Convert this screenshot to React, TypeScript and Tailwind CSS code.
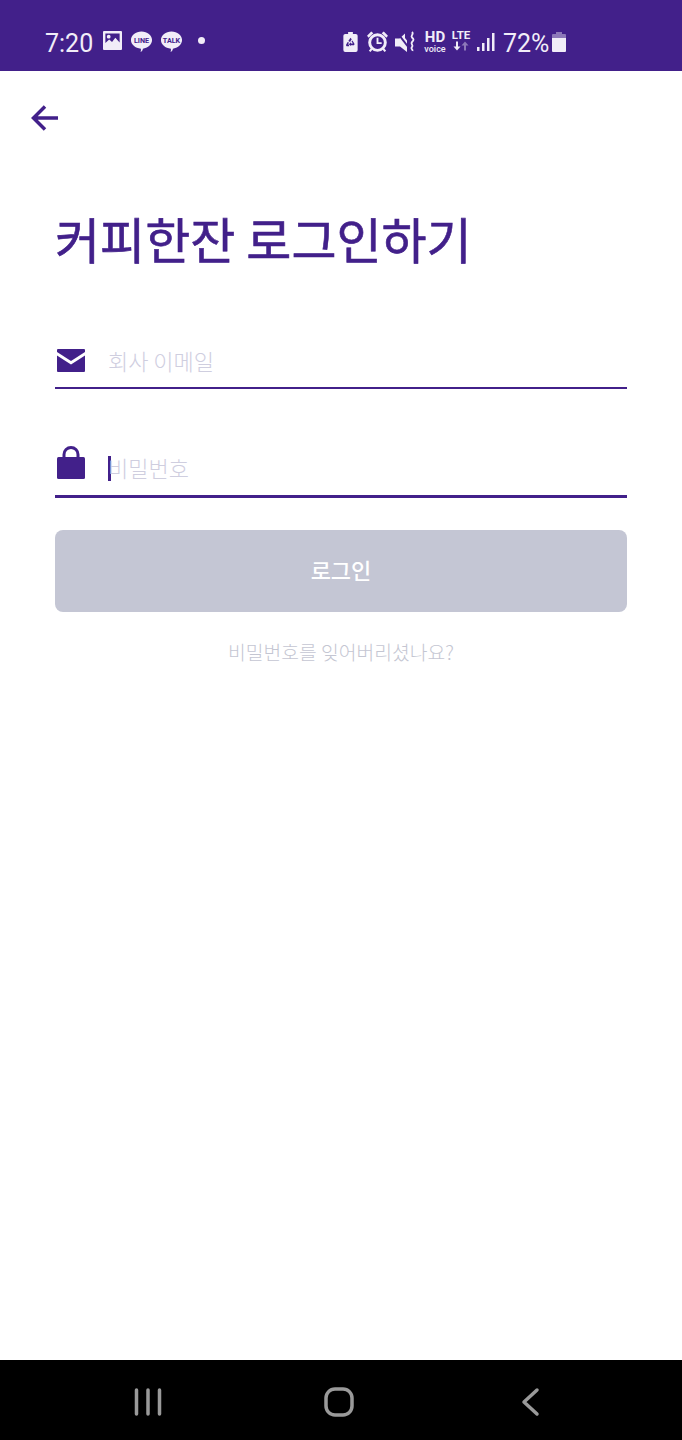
import React from 'react';

const PURPLE = '#42208a';

const StatusBar: React.FC = () => (
  <div className="flex h-[71px] items-center bg-[#42208a] pt-[12px] text-[#f1edf8]">
    <span className="ml-[45px] w-[48px] text-[25px] leading-none font-['Roboto',sans-serif] mt-[3px]">7:20</span>
    <svg className="ml-[10px] mt-[-3px]" width="19" height="19" viewBox="0 0 20 20">
      <path fill="currentColor" fillRule="evenodd" d="M1 0h18a1 1 0 0 1 1 1v18a1 1 0 0 1-1 1H1a1 1 0 0 1-1-1V1a1 1 0 0 1 1-1zm1.500 2.500v10l4-3.500 3 2.500 3.500-4.500 4.500 5V2.500zM6 4a2 2 0 1 1 0 4 2 2 0 0 1 0-4z" />
    </svg>
    <svg className="ml-[8px] mt-[-1px]" width="23" height="23" viewBox="0 0 24 24">
      <path fill="currentColor" d="M12 1.500c6 0 11 3.700 11 9 0 5-5 8.600-9.500 9-.2 1.600-1 2.700-2.500 3.500.4-1.200.5-2.400.4-3.500C5.500 19 1 15.300 1 10.500c0-5.300 5-9 11-9z" />
      <text x="12" y="13.500" textAnchor="middle" fontSize="7.500" fontWeight="700" fill="#42208a" fontFamily="Roboto, sans-serif">LINE</text>
    </svg>
    <svg className="ml-[7px] mt-[-1px]" width="23" height="23" viewBox="0 0 24 24">
      <path fill="currentColor" d="M12 1.500c6 0 11 3.700 11 9 0 5-5 8.600-9.500 9-.2 1.600-1 2.700-2.500 3.500.4-1.200.5-2.400.4-3.500C5.500 19 1 15.300 1 10.500c0-5.300 5-9 11-9z" />
      <text x="12" y="13.500" textAnchor="middle" fontSize="7.500" fontWeight="700" fill="#42208a" fontFamily="Roboto, sans-serif">TALK</text>
    </svg>
    <span className="ml-[15px] mt-[-3px] h-[7px] w-[7px] rounded-full bg-[#f1edf8]" />

    <svg className="ml-[138px]" width="15" height="20" viewBox="0 0 15 21">
      <path fill="currentColor" fillRule="evenodd" d="M5 0h5v2h3a2 2 0 0 1 2 2v15a2 2 0 0 1-2 2H2a2 2 0 0 1-2-2V4a2 2 0 0 1 2-2h3zM7.500 6 5.200 9.500 7 10.500l1.800-2.800zM9.500 9 8.600 9.600 10 12H8v-1.200l-2.300 2 2.300 2V14h2.500a1.200 1.200 0 0 0 1-1.800zM4.500 10.500l-1.500 2.700A1.200 1.200 0 0 0 4 15h2v-1.800H4.700l1.300-2z" />
    </svg>
    <svg className="ml-[8px]" width="23" height="23" viewBox="0 0 22 22">
      <circle cx="11" cy="12" r="7.500" fill="none" stroke="currentColor" strokeWidth="2.800" />
      <path fill="none" stroke="currentColor" strokeWidth="1.800" d="M11 7.500V12.500h4" />
      <path fill="currentColor" d="M1 5.500 5 1.500l2 1.500-4.500 4.500zM21 5.500 17 1.500l-2 1.500 4.500 4.500z" />
      <path stroke="currentColor" strokeWidth="2" d="M5.500 18 3.500 20.500M16.500 18l2 2.500" />
    </svg>
    <svg className="ml-[6px]" width="22" height="22" viewBox="0 0 22 22">
      <path fill="currentColor" d="M0 7.500h4.500L10 2.500V7L12 9.500V21L5 15.500H0z" />
      <path stroke="#42208a" strokeWidth="2" d="M1 0 14 17" />
      <path fill="none" stroke="currentColor" strokeWidth="1.800" d="M17 1c2.500 2.500-2 3.500 0 5.500s2 2.500 0 4.500 2 3 0 5 1 2 .5 4" />
    </svg>
    <div className="ml-[6px] flex w-[24px] flex-col items-center font-['Roboto',sans-serif] font-bold">
      <span className="text-[15px] leading-[14px]">HD</span>
      <span className="mt-[1px] text-[9px] leading-[9px] font-medium">voice</span>
    </div>
    <div className="ml-[2px] flex w-[24px] flex-col items-center mt-[-3px] font-['Roboto',sans-serif]">
      <span className="text-[11.5px] leading-[11px] font-bold">LTE</span>
      <svg width="16" height="10" viewBox="0 0 16 9">
        <path fill="currentColor" d="M3 0h2v5h2.500L4 9 .5 5H3z" />
        <path fill="#8d78b9" d="M11 9h2V4h2.500L12 0 8.500 4H11z" />
      </svg>
    </div>
    <svg className="ml-[3px] mt-[1px]" width="19" height="19" viewBox="0 0 19 19">
      <rect x="1" y="14" width="2.500" height="4" fill="currentColor" />
      <rect x="6" y="10" width="2.500" height="8" fill="currentColor" />
      <rect x="11" y="5" width="2.500" height="13" fill="currentColor" />
      <rect x="16" y="0" width="2.500" height="18" fill="currentColor" />
    </svg>
    <span className="ml-[8px] text-[25px] leading-none font-['Roboto',sans-serif] mt-[3px]">72%</span>
    <svg className="ml-[3px]" width="14" height="20" viewBox="0 0 14 20">
      <path fill="#8d78b9" d="M4 0h6v2h3a1 1 0 0 1 1 1v4H0V3a1 1 0 0 1 1-1h3z" />
      <path fill="currentColor" d="M0 6h14v13a1 1 0 0 1-1 1H1a1 1 0 0 1-1-1z" />
    </svg>
  </div>
);

const MailIcon = () => (
  <svg width="28" height="23" viewBox="0 0 28 23">
    <path fill={PURPLE} d="M1 0h26a1 1 0 0 1 1 1v2L14 12 0 3V1a1 1 0 0 1 1-1z" />
    <path fill={PURPLE} d="M0 6.500 14 15.500l14-9V22a1 1 0 0 1-1 1H1a1 1 0 0 1-1-1z" />
  </svg>
);

const LockIcon = () => (
  <svg width="28" height="33" viewBox="0 0 28 33">
    <path fill="none" stroke={PURPLE} strokeWidth="3" d="M7 12V8.500a7 7 0 0 1 14 0V12" />
    <rect x="0" y="11" width="28" height="22" rx="1.500" fill={PURPLE} />
  </svg>
);

const App: React.FC = () => {
  return (
    <div className="flex h-[1440px] w-[682px] flex-col bg-white font-['Noto_Sans_CJK_KR','Noto_Sans',sans-serif]">
      <StatusBar />

      <main className="flex-1 px-[55px]">
        <svg className="ml-[-25px] mt-[32px] block" width="30" height="30" viewBox="0 0 30 30">
          <path fill="none" stroke={PURPLE} strokeWidth="3.500" d="M28 15H4M15 3.500 3.500 15 15 26.500" />
        </svg>

        <h1 className="mt-[70px] text-[49px] leading-[70px] font-normal text-[#42208a] [-webkit-text-stroke:0.6px_#42208a]">커피한잔 로그인하기</h1>

        <div className="mt-[56px] flex h-[60px] items-center border-b-2 border-[#42208a]">
          <span className="ml-[2px] flex w-[51px] mt-[4px]"><MailIcon /></span>
          <span className="mt-[4px] text-[22px] font-light text-[#cfcedf]">회사 이메일</span>
        </div>

        <div className="mt-[45px] flex h-[64px] items-center border-b-[3px] border-[#42208a]">
          <span className="ml-[2px] flex w-[51px] mt-[-4px]"><LockIcon /></span>
          <span className="h-[25px] w-[3px] bg-[#42208a] mt-[8px]" />
          <span className="ml-[-3px] mt-[6px] text-[22px] font-light text-[#cfcedf]">비밀번호</span>
        </div>

        <button className="mt-[32px] flex h-[82px] w-full items-center justify-center rounded-[8px] bg-[#c4c6d4] pb-[3px] text-[22px] font-medium text-white">
          로그인
        </button>

        <p className="mt-[22px] text-center text-[19.3px] leading-[36px] font-light text-[#c4c6d2]">비밀번호를 잊어버리셨나요?</p>
      </main>

      <nav className="flex h-[80px] items-center bg-black text-[#9a9a9a]">
        <svg className="ml-[134px] mt-[4px]" width="28" height="28" viewBox="0 0 28 28">
          <path stroke="currentColor" strokeWidth="3.500" strokeLinecap="round" d="M2.500 2v24M14 2v24M25.500 2v24" />
        </svg>
        <svg className="ml-[162px] mt-[4px]" width="30" height="30" viewBox="0 0 30 30">
          <rect x="2" y="2" width="26" height="26" rx="9" fill="none" stroke="currentColor" strokeWidth="3.500" />
        </svg>
        <svg className="ml-[166px] mt-[4px]" width="20" height="30" viewBox="0 0 20 30">
          <path fill="none" stroke="currentColor" strokeWidth="3.500" strokeLinecap="round" strokeLinejoin="round" d="M17 3 4 15 17 27" />
        </svg>
      </nav>
    </div>
  );
};

export default App;
